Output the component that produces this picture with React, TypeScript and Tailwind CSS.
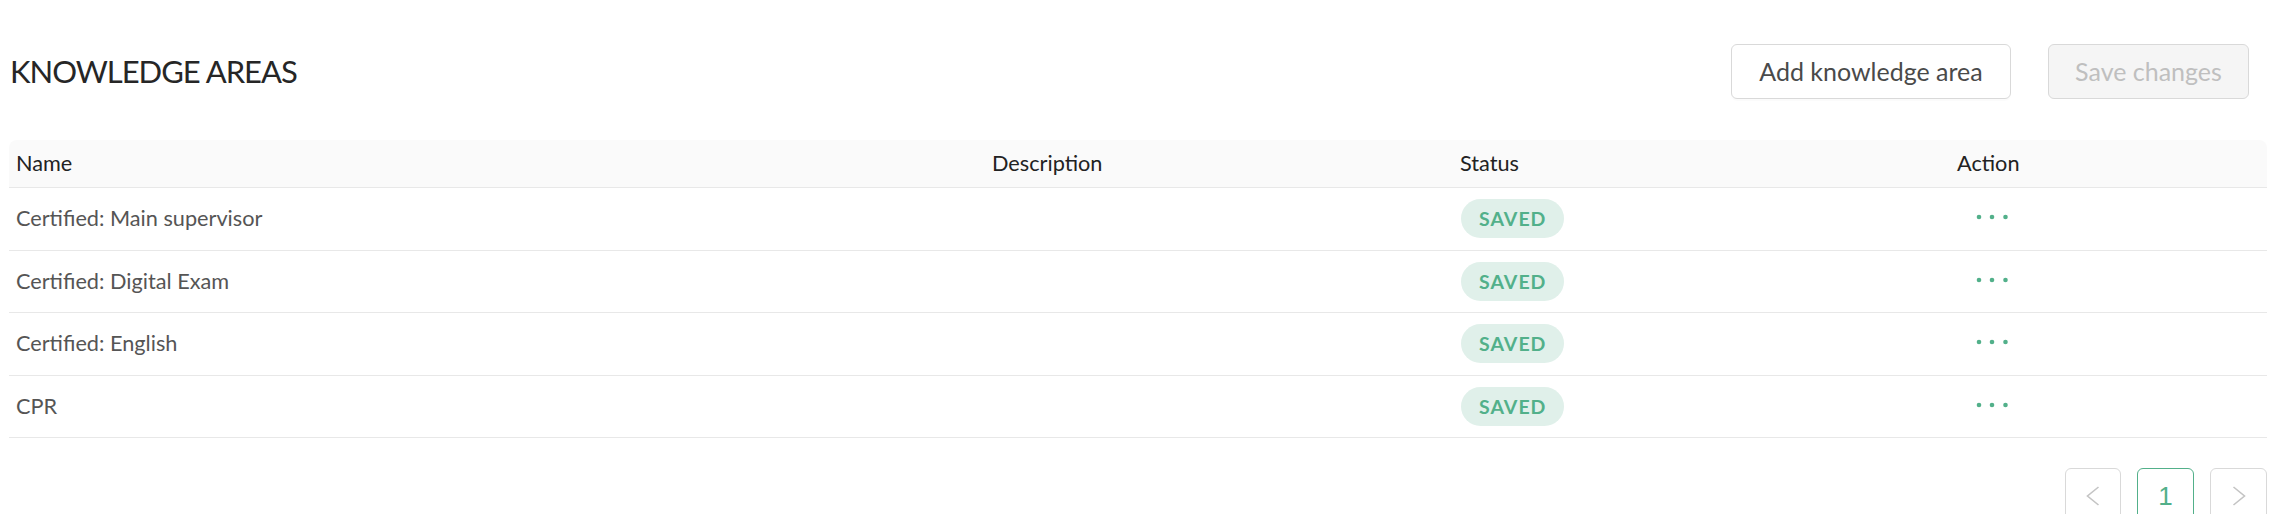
type Area = {
  name: string
  description: string
  status: 'SAVED'
}

const areas: Area[] = [
  { name: 'Certified: Main supervisor', description: '', status: 'SAVED' },
  { name: 'Certified: Digital Exam', description: '', status: 'SAVED' },
  { name: 'Certified: English', description: '', status: 'SAVED' },
  { name: 'CPR', description: '', status: 'SAVED' },
]

function Dots() {
  return (
    <svg width="34" height="8" viewBox="0 0 34 8" className="text-[#52b08a]">
      <circle cx="4" cy="4" r="2.3" fill="currentColor" />
      <circle cx="17" cy="4" r="2.3" fill="currentColor" />
      <circle cx="30.5" cy="4" r="2.3" fill="currentColor" />
    </svg>
  )
}

function Chevron({ dir }: { dir: 'left' | 'right' }) {
  return (
    <svg width="14" height="20" viewBox="0 0 14 20" fill="none" stroke="currentColor" strokeWidth="1.6">
      {dir === 'left' ? <polyline points="12.5,1 1.5,10 12.5,19" /> : <polyline points="1.5,1 12.5,10 1.5,19" />}
    </svg>
  )
}

export default function App() {
  return (
    <div className="min-h-screen bg-white pl-[9px] pr-[23px] pt-[44px] font-['Lato',sans-serif]">
      {/* Header */}
      <div className="flex h-[55px] items-center justify-between">
        <h1 className="pl-[1px] text-[31px] font-normal tracking-[-1px] text-[#262626]">
          KNOWLEDGE AREAS
        </h1>
        <div className="mr-[18px] flex items-center gap-[37px]">
          <button className="h-[55px] w-[280px] rounded-[6px] border border-[#d9d9d9] bg-white text-[25px] text-[#4a4a4a] shadow-[0_2px_0_rgba(0,0,0,0.015)]">
            Add knowledge area
          </button>
          <button
            disabled
            className="h-[55px] w-[201px] rounded-[6px] border border-[#d9d9d9] bg-[#f5f5f5] text-[25px] text-[#bfbfbf]"
          >
            Save changes
          </button>
        </div>
      </div>

      {/* Table */}
      <div className="mt-[41px]">
        <div className="grid h-[48px] grid-cols-[976px_468px_497px_1fr] items-center rounded-t-[8px] border-b border-[#e8e8e8] bg-[#fafafa] text-[21.7px] text-[#222]">
          <div className="px-[7px]">Name</div>
          <div className="px-[7px]">Description</div>
          <div className="px-[7px]">Status</div>
          <div className="px-[7px]">Action</div>
        </div>
        {areas.map((a) => (
          <div
            key={a.name}
            className="grid h-[62.5px] grid-cols-[976px_468px_497px_1fr] items-center border-b border-[#e8e8e8] text-[21.7px] text-[#555]"
          >
            <div className="px-[7px]">{a.name}</div>
            <div className="px-[7px]">{a.description}</div>
            <div className="px-[8px]">
              <span className="inline-flex h-[39px] items-center rounded-full bg-[#e0f0ea] px-[18px] text-[19.5px] font-bold tracking-[1px] text-[#52b08a]">
                {a.status}
              </span>
            </div>
            <div className="flex items-center pl-[25px] pb-[3px]">
              <Dots />
            </div>
          </div>
        ))}
      </div>

      {/* Pagination */}
      <div className="mt-[30px] flex justify-end gap-[16px] font-['Liberation_Sans',sans-serif]">
        <button className="flex h-[56px] w-[56px] items-center justify-center rounded-[6px] border border-[#d9d9d9] text-[#c4c4c4]">
          <Chevron dir="left" />
        </button>
        <button className="flex h-[56px] w-[57px] items-center justify-center rounded-[6px] border border-[#52b08a] text-[26px] text-[#52b08a]">
          1
        </button>
        <button className="flex h-[56px] w-[57px] items-center justify-center rounded-[6px] border border-[#d9d9d9] text-[#c4c4c4]">
          <Chevron dir="right" />
        </button>
      </div>
    </div>
  )
}
